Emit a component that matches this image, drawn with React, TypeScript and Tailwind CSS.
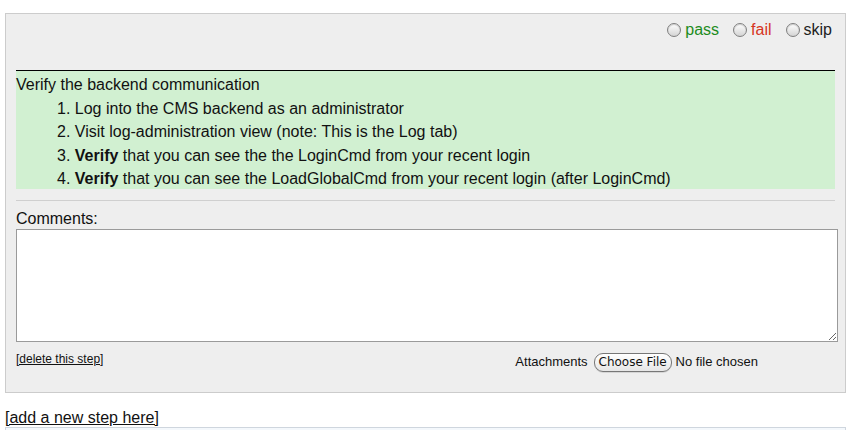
import React from 'react'

const Radio = ({ label, color }: { label: string; color: string }) => (
  <label className="flex items-center gap-[4px]">
    <span className="shrink-0 w-[14px] h-[14px] rounded-full border border-[#7f7f7f] bg-gradient-to-b from-[#ffffff] to-[#d4d4d4] shadow-[inset_0_1px_1px_rgba(0,0,0,0.2)]" />
    <span className={color}>{label}</span>
  </label>
)

const steps: { bold?: string; text: string }[] = [
  { text: 'Log into the CMS backend as an administrator' },
  { text: 'Visit log-administration view (note: This is the Log tab)' },
  { bold: 'Verify', text: ' that you can see the the LoginCmd from your recent login' },
  {
    bold: 'Verify',
    text: ' that you can see the LoadGlobalCmd from your recent login (after LoginCmd)',
  },
]

export default function App() {
  return (
    <div className="w-[850px] h-[430px] overflow-hidden bg-white text-[#111] font-['Liberation_Sans',Arial,sans-serif] text-[16px]">
      <div className="h-[13px]" />
      <div className="ml-[5px] w-[841px] border border-[#cccccc] bg-[#eeeeee] px-[10px] pt-[8px] pb-[20px]">
        <div className="flex justify-end gap-[14px] h-[16px] leading-[16px] pr-[3px]">
          <Radio label="pass" color="text-[#1c8c1c]" />
          <Radio label="fail" color="text-[#d6351f]" />
          <Radio label="skip" color="text-[#222]" />
        </div>

        <div className="mt-[32px] h-[119px] pt-[2px] border-t border-black bg-[#d1f0d1] leading-[23.6px]">
          <div>Verify the backend communication</div>
          {steps.map((s, i) => (
            <div key={i} className="pl-[41px]">
              {i + 1}. {s.bold && <strong>{s.bold}</strong>}
              {s.text}
            </div>
          ))}
        </div>

        <div className="mt-[11px] border-t border-[#cfcfcf]" />

        <div className="mt-[10px] leading-[16px]">Comments:</div>
        <textarea className="mt-[2px] block w-[822px] h-[113px] -mr-[2px] border border-[#9a9a9a] bg-white outline-none" />

        <div className="mt-[10px] flex justify-between items-start pr-[77px]">
          <a href="#" className="text-[12px] leading-[14px] underline text-[#111]">
            [delete this step]
          </a>
          <div className="h-[20px] flex items-center text-[13px] gap-[6px]">
            <span>Attachments</span>
            <span className="h-[19px] w-[78px] justify-center flex items-center rounded-[9px] border border-[#777] bg-gradient-to-b from-white to-[#e6e6e6] text-[12px] font-['DejaVu_Sans',sans-serif] text-[#111] shadow-[0_1px_0_rgba(0,0,0,0.1)]">
              Choose File
            </span>
            <span className="-ml-[2px]">No file chosen</span>
          </div>
        </div>
      </div>

      <div className="mt-[16px] ml-[5px] leading-[18px]">
        <a href="#" className="underline text-[#111]">
          [add a new step here]
        </a>
      </div>
      <div className="ml-[5px] w-[841px] h-[20px] border-t border-x border-[#cfd6de] bg-[#f4f8fc]" />
    </div>
  )
}
